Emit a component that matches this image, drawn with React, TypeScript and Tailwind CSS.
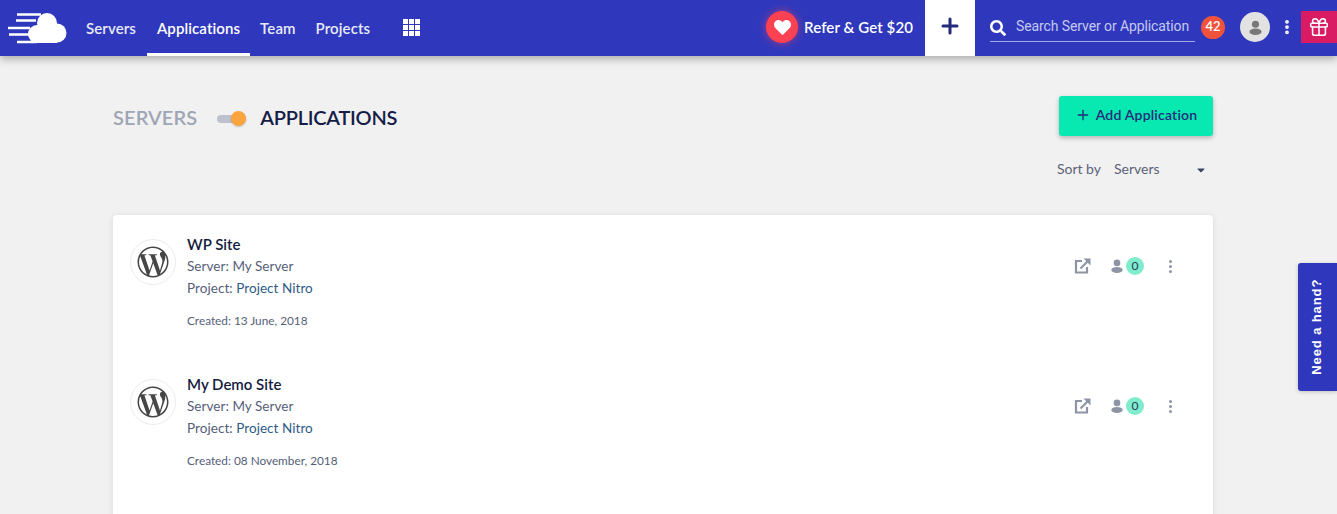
import { FaWordpressSimple, FaHeart, FaSearch, FaCaretDown } from 'react-icons/fa'
import { Gift, Plus, MoreVertical } from 'lucide-react'

const sites = [
  { name: 'WP Site', created: '13 June, 2018' },
  { name: 'My Demo Site', created: '08 November, 2018' },
]

function Logo() {
  return (
    <svg width="60" height="32" viewBox="0 0 60 32" className="ml-2 -mt-[1px] shrink-0">
      <circle cx="39" cy="11" r="10" fill="#fff" />
      <circle cx="49" cy="21" r="9.500" fill="#fff" />
      <circle cx="29" cy="22" r="9" fill="#fff" />
      <rect x="29" y="14" width="20" height="17" fill="#fff" />
      <path d="M9 2.500h24M8 8.500h20M0 16h22M1 22.500h20M9 30h20" stroke="#fff" strokeWidth="2.400" fill="none" />
    </svg>
  )
}

function Grid() {
  return (
    <div className="grid grid-cols-3 gap-[1px] w-[17px] ml-[23px] -mt-[1px]">
      {Array.from({ length: 9 }).map((_, i) => (
        <span key={i} className="w-[5px] h-[5px] bg-white" />
      ))}
    </div>
  )
}

function UserIcon({ size, color }: { size: number; color: string }) {
  return (
    <svg width={size} height={size} viewBox="0 0 14 16">
      <circle cx="7" cy="4.500" r="3.800" fill={color} />
      <ellipse cx="7" cy="12.500" rx="6.500" ry="3.500" fill={color} />
    </svg>
  )
}

function OpenIcon() {
  return (
    <svg width="17" height="16" viewBox="0 0 17 16" fill="none" stroke="#8d94a5">
      <path d="M8 3H2v11.500h11V9" strokeWidth="2.200" />
      <path d="M6.500 10.500 14 3" strokeWidth="2.200" />
      <path d="M9.500 0.500H16.500V7.500Z" fill="#8d94a5" stroke="none" />
    </svg>
  )
}

function Header() {
  return (
    <header className="h-14 bg-[#2f38bd] flex items-center shadow-[0_3px_8px_rgba(0,0,0,0.3)] relative z-10">
      <Logo />
      <nav className="flex items-center h-14 ml-2 text-[15px] font-semibold tracking-[0.1px] text-[#e8eaf8]">
        <a className="pl-[10px] pr-[11px] h-14 flex items-center">Servers</a>
        <a className="px-[10px] h-14 flex items-center border-b-[3px] border-white pt-[3px] text-white">Applications</a>
        <a className="px-[10px] h-14 flex items-center">Team</a>
        <a className="px-[10px] h-14 flex items-center">Projects</a>
      </nav>
      <Grid />
      <div className="ml-auto flex items-center h-14">
        <div className="mb-[2px] w-8 h-8 rounded-full bg-[#fb4152] flex items-center justify-center shadow-[0_0_8px_rgba(251,65,82,0.6)]">
          <FaHeart className="text-white" size={17} />
        </div>
        <span className="mb-[2px] ml-[6px] text-[15px] font-semibold tracking-[0.1px] text-white whitespace-nowrap">Refer &amp; Get $20</span>
        <div className="ml-3 w-[50px] h-14 bg-white flex items-center justify-center pb-[4px]">
          <Plus size={24} strokeWidth={3} className="text-[#232a7c]" />
        </div>
        <div className="ml-[15px] w-[205px] h-[42px] self-start border-b border-[#a5a9e6] flex items-center pt-[11px]">
          <FaSearch size={16} className="text-white mt-[3px] shrink-0" />
          <span className="ml-[10px] text-[14px] tracking-[-0.1px] text-[#c5c8f0] whitespace-nowrap font-['Roboto',sans-serif]">Search Server or Application</span>
        </div>
        <div className="mb-[2px] ml-[6px] w-6 h-[23px] rounded-full bg-[#f0523c] text-white text-[13px] font-semibold flex items-center justify-center">42</div>
        <div className="mb-[2px] ml-[15px] w-[30px] h-[30px] rounded-full bg-[#e2e2e2] flex items-center justify-center">
          <UserIcon size={15} color="#777" />
        </div>
        <MoreVertical size={18} strokeWidth={3} className="mb-[2px] ml-[8px] text-white" />
        <div className="mb-[2px] ml-[5px] w-[36px] h-[32px] bg-[#d91b63] flex items-center justify-center">
          <Gift size={22} strokeWidth={1.700} className="text-white" />
        </div>
      </div>
    </header>
  )
}

function SiteRow({ name, created }: { name: string; created: string }) {
  return (
    <div className="flex h-[140px]">
      <div className="w-[46px] h-[46px] rounded-full border border-[#ececec] flex items-center justify-center mt-[6px]">
        <FaWordpressSimple size={32} className="text-[#464646]" />
      </div>
      <div className="ml-[11px] flex-1">
        <div className="text-[15px] leading-[22px] font-semibold text-[#141b3d]">{name}</div>
        <div className="text-[13.500px] tracking-[0.05px] leading-[22px] text-[#555e79]">Server: My Server</div>
        <div className="text-[13.500px] tracking-[0.05px] leading-[22px] text-[#555e79]">
          Project: <span className="text-[#2e5a86]">Project Nitro</span>
        </div>
        <div className="mt-[11px] text-[11.800px] leading-[22px] text-[#555e79]">Created: {created}</div>
      </div>
      <div className="flex items-center h-[22px] mt-[22px] mr-[24px]">
        <OpenIcon />
        <div className="ml-[19px] flex"><UserIcon size={14} color="#8d94a5" /></div>
        <div className="ml-[2px] w-[18px] h-[18px] rounded-full bg-[#7feccb] text-[12px] text-[#1f3a5f] flex items-center justify-center">0</div>
        <div className="ml-[25px] flex flex-col gap-[2px]">
          <span className="w-[3px] h-[3px] rounded-full bg-[#8d94a5]" />
          <span className="w-[3px] h-[3px] rounded-full bg-[#8d94a5]" />
          <span className="w-[3px] h-[3px] rounded-full bg-[#8d94a5]" />
        </div>
      </div>
    </div>
  )
}

export default function App() {
  return (
    <div className="h-[514px] overflow-hidden bg-[#f1f1f1] relative font-['Lato','Open_Sans',sans-serif]">
      <Header />
      <main className="w-[1100px] ml-[113px]">
        <div className="flex items-start justify-between pt-10">
          <div className="flex items-center h-[42px] text-[20px] font-semibold">
            <span className="text-[#9ea5b4] pb-[1px] tracking-[0.1px]">SERVERS</span>
            <div className="relative mt-[3px] ml-5 w-[29px] h-[8px] rounded-full bg-[#bdc1ce]">
              <span className="absolute right-0 top-[-4px] w-[15px] h-[15px] rounded-full bg-[#fba33c] shadow-[0_1px_2px_rgba(0,0,0,0.2)]" />
            </div>
            <span className="ml-[14px] text-[#151c47] pb-[1px] tracking-[-0.25px]">APPLICATIONS</span>
          </div>
          <button className="w-[154px] h-10 rounded-[3px] bg-[#07e9b0] shadow-[0_2px_5px_rgba(0,0,0,0.25)] flex items-center justify-center text-[14px] font-semibold tracking-[0.2px] text-[#232a7c] pb-[3px]">
            <Plus size={16} strokeWidth={2} className="mr-[5px]" />
            Add Application
          </button>
        </div>
        <div className="flex items-center justify-end mt-5 h-5 text-[14px] text-[#5b6278]">
          <span>Sort by</span>
          <span className="ml-[13px] w-[81px]">Servers</span>
          <FaCaretDown size={12} className="text-[#3d4465] mr-[6px] mt-1" />
        </div>
        <section className="mt-[37px] bg-white rounded-[4px] shadow-[0_1px_6px_rgba(0,0,0,0.1)] pt-[18px] px-[17px] h-[400px]">
          {sites.map((s) => (
            <SiteRow key={s.name} name={s.name} created={s.created} />
          ))}
        </section>
      </main>
      <div className="absolute right-0 top-[263px] w-[39px] h-[128px] rounded-l-[3px] bg-[#2f38bd] flex items-center justify-center shadow-[0_1px_4px_rgba(0,0,0,0.2)]">
        <span className="-rotate-90 whitespace-nowrap text-[13px] font-bold tracking-[0.9px] text-white font-['Liberation_Sans',sans-serif]">Need a hand?</span>
      </div>
    </div>
  )
}
